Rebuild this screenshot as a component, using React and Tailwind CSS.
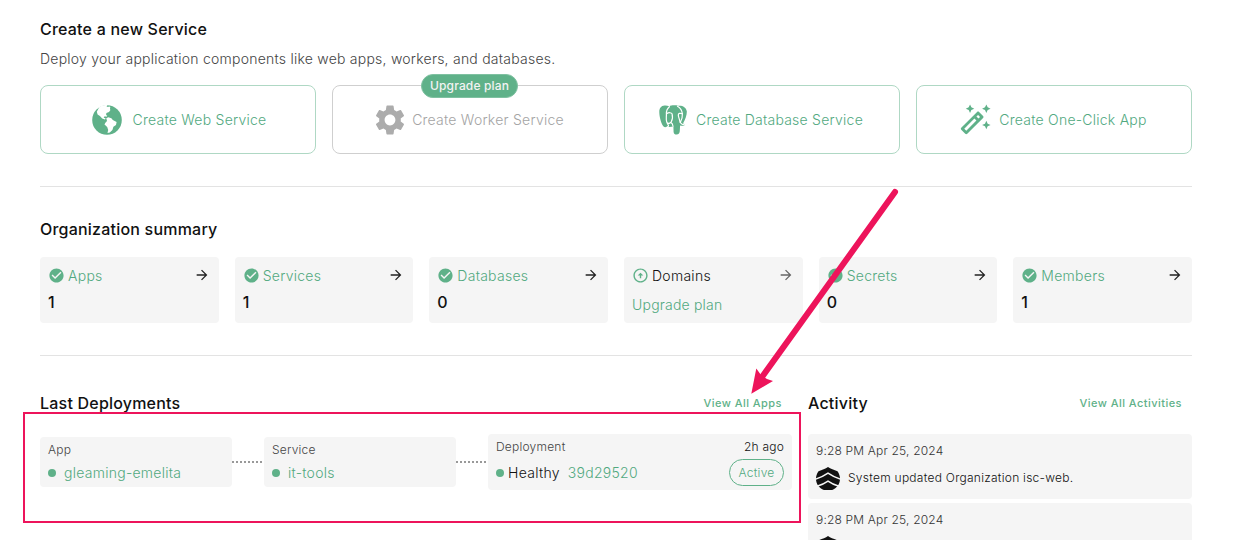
import { MdArrowCircleUp, MdArrowForward, MdCheckCircle, MdOutlineAutoFixHigh, MdSettings } from "react-icons/md";

function Globe() {
  return (
    <svg viewBox="0 0 30 30" className="size-[30px] shrink-0">
      <circle cx="15" cy="15" r="14.8" fill="#5fb189" />
      <path
        d="M7.200 2.200C9.500.7 12-.2 15.500 0l-1 1.300 1.300.6 1.500-.5 1 .6-.3 1.500.3 1.700-1.300 1.900-2.600.8-.3 2 1.200.9-.8.9-1.700-.5-1.200 1.400 2.100.8-.8 1-2.700-.8-2.300-2.600-2.300-1.400-.8-2.800z"
        fill="#fff"
      />
      <path d="M14.300 13.200l2-.9 3.100.9 1.400 1.700 3.800 2-.6 3.200-2.600 1.700-1 3.200-2.600 2.500-2.300.4.700-2.800-1-3.200-2.700-2.300.7-1.700 1.800-2z" fill="#fff" />
    </svg>
  );
}

function Elephant() {
  return (
    <svg viewBox="0 0 28 30" className="h-[30px] w-7 shrink-0">
      <path
        d="M5.600.6C2 .8.300 3.400.300 7c0 4.800 1.800 11.400 4 14.200 1.500 1.500 3.200 1.100 4.600-.4l1.500 1.100 4-.4.2 5.500c.2 2 1.300 2.500 3 2.500 2.200-.1 3.100-1.300 3.200-3.700l.3-5.300c2.200.5 4.500.3 5.500-1.100l-2.600-1C26.400 14.500 28 10 27.800 6.200 27 2.200 23.600.300 19.200.8 15.500-.1 12 .4 10.200 1.200A12 12 0 0 0 5.600.6z"
        fill="#5fb189"
      />
      <g fill="none" stroke="#fff" strokeWidth="1.200" strokeLinecap="round" strokeLinejoin="round">
        <path d="M10.400 1.700C7.800 4 7.200 6.400 7.400 9c.2 3.300-.8 5.800.5 8.400l1.600 3.200" />
        <path d="M7.600 8.800c1.800-1.500 5-1.400 5.500.1.600 2.600.8 5-.7 7.500-.9 1.800-2.500 2.400-3.700 1.500" />
        <path d="M18.500 1.200c3 1.700 4.600 5 4.900 7.700.3 4-.9 6-2.200 8.600 1.200 1.700 2.800 2.700 5.600 2.200" />
        <path d="M23.200 8.700c-1.900-.8-3.900-.3-3.900 1.200 0 2.200 1.500 4.700 1.700 7" />
        <path d="M14 21.200c-.2-2.100-1-3.200-2.100-3.700" />
      </g>
    </svg>
  );
}

function Avatar() {
  return (
    <svg viewBox="0 0 24 24" className="size-6 shrink-0">
      <path
        d="M12 0c2.500 1.900 6 3 9.500 4.300 1.700 2.300 2.500 4.800 2.500 7.700 0 5-3.300 9.300-7.900 11L12 23l-4.100 0C3.300 21.300 0 17 0 12c0-2.900.8-5.400 2.500-7.700C6 3 9.500 1.900 12 0z"
        fill="#111"
      />
      <path d="M-.5 12.200Q6.500 10 12 6.200Q17.500 10 24.500 12.200M1 19.300Q7 17.700 12 14.200Q17 17.700 23 19.300" fill="none" stroke="#f5f5f5" strokeWidth="1.500" />
    </svg>
  );
}

const services = [
  { label: "Create Web Service", icon: <Globe />, layout: "gap-[11px] pl-0.5" },
  { label: "Create Worker Service", icon: <MdSettings className="size-9 shrink-0" />, layout: "gap-1 pr-1", locked: true },
  { label: "Create Database Service", icon: <Elephant />, layout: "gap-[9px] pr-0.5" },
  { label: "Create One-Click App", icon: <MdOutlineAutoFixHigh className="size-[34px] shrink-0" />, layout: "gap-[7px] pr-[3px]" },
];

const summary = [
  { label: "Apps", value: "1" },
  { label: "Services", value: "1" },
  { label: "Databases", value: "0" },
  { label: "Domains", locked: true },
  { label: "Secrets", value: "0" },
  { label: "Members", value: "1" },
];

function Heading({ children }) {
  return <h2 className="text-base font-medium tracking-[0.21px] text-[#111]">{children}</h2>;
}

function ServiceCard({ label, icon, layout, locked }) {
  return (
    <div className={`relative flex h-[69px] items-center justify-center rounded-lg border ${layout} ${locked ? "border-[#cfcfcf] text-[#acacac]" : "border-[#afd8c4] text-[#5fb189]"}`}>
      {icon}
      <span className={`text-sm font-light tracking-[0.24px] ${locked ? "text-[#a4a4a4]" : "text-[#52a97f]"}`}>{label}</span>
      {locked && (
        <span className="absolute -top-3 left-[88px] flex h-6 w-[97px] items-center justify-center rounded-full border border-[#7fc1a1] bg-[#5fb189] text-xs font-medium tracking-[0.15px] text-[#f3f3f3]">
          Upgrade plan
        </span>
      )}
    </div>
  );
}

function SummaryCard({ label, value, locked }) {
  return (
    <div className="h-[66px] rounded bg-[#f5f5f5] px-2 pt-2">
      <div className="flex h-[22px] items-center">
        {locked ? <MdArrowCircleUp className="mb-0.5 size-[17px] text-[#5fb189]" /> : <MdCheckCircle className="mb-0.5 size-[17px] text-[#5fb189]" />}
        <span className={`ml-[3px] text-sm font-light tracking-[0.27px] ${locked ? "text-[#111]" : "text-[#52a97f]"}`}>{label}</span>
        <MdArrowForward className={`mr-px mb-0.5 ml-auto size-4 ${locked ? "text-[#666]" : "text-[#222]"}`} />
      </div>
      {locked ? (
        <p className="pt-2 text-sm font-light tracking-[0.2px] text-[#52a97f]">Upgrade plan</p>
      ) : (
        <p className="pt-[3px] text-base font-medium text-[#111]">{value}</p>
      )}
    </div>
  );
}

function Dot() {
  return <span className="size-2 shrink-0 rounded-full bg-[#5fb189]" />;
}

function Node({ title, name }) {
  return (
    <div className="h-[50px] w-48 rounded bg-[#f5f5f5] px-2 pt-1">
      <p className="text-xs leading-[18px] font-light tracking-[0.2px] text-[#444]">{title}</p>
      <div className="flex items-center gap-2 pt-1 text-sm leading-5 font-light tracking-[0.26px] text-[#52a97f]">
        <Dot />
        {name}
      </div>
    </div>
  );
}

function Connector() {
  return <div className="mr-0.5 h-0.5 w-[30px] bg-[repeating-linear-gradient(90deg,#999_0_2px,transparent_2px_4px)]" />;
}

function Activity({ message }) {
  return (
    <div className="h-[65px] shrink-0 rounded bg-[#f5f5f5] px-2 pt-2">
      <p className="text-xs leading-[18px] font-light tracking-[0.18px] text-[#333]">9:28 PM Apr 25, 2024</p>
      <div className="flex items-center gap-2 pt-[7px]">
        <Avatar />
        {message && <span className="pb-0.5 text-xs font-light tracking-[0.26px] text-[#111]">{message}</span>}
      </div>
    </div>
  );
}

export default function App() {
  return (
    <div className="relative h-[540px] w-[1256px] overflow-hidden bg-white px-10 pt-[17px] font-[Inter,sans-serif]">
      <div className="w-[1152px]">
        <Heading>Create a new Service</Heading>
        <p className="mt-2 text-sm leading-5 font-light tracking-[0.235px] text-[#444]">
          Deploy your application components like web apps, workers, and databases.
        </p>
        <div className="mt-4 grid grid-cols-4 gap-4">
          {services.map((s) => (
            <ServiceCard key={s.label} {...s} />
          ))}
        </div>
        <hr className="mt-8 border-[#e3e3e3]" />
        <div className="mt-[30px]">
          <Heading>Organization summary</Heading>
        </div>
        <div className="mt-4 grid grid-cols-6 gap-4">
          {summary.map((s) => (
            <SummaryCard key={s.label} {...s} />
          ))}
        </div>
        <hr className="mt-8 border-[#e3e3e3]" />
        <div className="mt-[35px] flex gap-4">
          <section className="w-[752px]">
            <div className="flex items-center justify-between pr-2.5">
              <Heading>Last Deployments</Heading>
              <span className="text-[11px] font-medium tracking-[0.46px] text-[#5fb189]">View All Apps</span>
            </div>
            <div className="mt-[19px] flex items-center">
              <Node title="App" name="gleaming-emelita" />
              <Connector />
              <Node title="Service" name="it-tools" />
              <Connector />
              <div className="h-14 w-[304px] rounded bg-[#f5f5f5] px-2 pt-1">
                <div className="flex justify-between text-xs leading-[18px] font-light tracking-[0.22px]">
                  <span className="text-[#444]">Deployment</span>
                  <span className="text-[#111]">2h ago</span>
                </div>
                <div className="mt-[3px] flex items-center text-sm font-light tracking-[0.28px]">
                  <Dot />
                  <span className="ml-1 text-[#111]">Healthy</span>
                  <span className="ml-2 text-[#52a97f]">39d29520</span>
                  <span className="ml-auto flex h-[27px] w-[55px] items-center justify-center rounded-full border border-[#5fb189] text-xs text-[#52a97f]">
                    Active
                  </span>
                </div>
              </div>
            </div>
          </section>
          <section className="w-96">
            <div className="flex items-center justify-between pr-2.5">
              <Heading>Activity</Heading>
              <span className="text-[11px] font-medium tracking-[0.46px] text-[#5fb189]">View All Activities</span>
            </div>
            <div className="mt-[19px] flex flex-col gap-1">
              <Activity message="System updated Organization isc-web." />
              <Activity />
            </div>
          </section>
        </div>
      </div>
      <div className="absolute top-[412px] left-[23px] h-[111px] w-[778px] border-2 border-[#ed145b]" />
      <svg viewBox="0 0 160 220" className="absolute top-[180px] left-[745px] h-[220px] w-40">
        <path d="M150 12L17 197" stroke="#ed145b" strokeWidth="6" strokeLinecap="round" />
        <path d="M6.300 213.800L11.300 188.500L16 195L22 199L28 201Z" fill="#ed145b" />
      </svg>
    </div>
  );
}
